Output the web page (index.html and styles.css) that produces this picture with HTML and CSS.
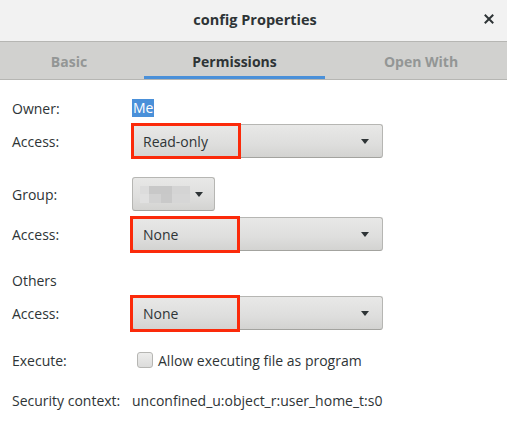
FILE: index.html
```html
<!DOCTYPE html>
<html>
<head>
<meta charset="utf-8">
<link rel="stylesheet" href="styles.css">
</head>
<body>
<div class="window">
  <header class="titlebar">
    <div class="title">config Properties</div>
    <div class="close">
      <svg width="10" height="10" viewBox="0 0 10 10"><path d="M1.5 1.5 L8.5 8.5 M8.5 1.5 L1.5 8.5" stroke="#2e3436" stroke-width="2" stroke-linecap="square"/></svg>
    </div>
  </header>
  <nav class="tabs">
    <div class="tab tab-basic">Basic</div>
    <div class="tab tab-perm active">Permissions</div>
    <div class="tab tab-open">Open With</div>
  </nav>
  <main class="content">
    <div class="row row-owner">
      <div class="label">Owner:</div>
      <div class="value"><span class="selected">Me</span></div>
    </div>
    <div class="row row-combo row-a1">
      <div class="label">Access:</div>
      <div class="value">
        <div class="combo wide">
          <span class="combo-text">Read-only</span>
          <span class="arrow"></span>
          <span class="mark"></span>
        </div>
      </div>
    </div>
    <div class="row row-combo row-group">
      <div class="label">Group:</div>
      <div class="value">
        <div class="combo small">
          <span class="blur">
            <i class="px a1"></i><i class="px a2"></i><i class="px a3"></i>
            <i class="px b1"></i><i class="px b2"></i><i class="px b3"></i><i class="px b4"></i>
          </span>
          <span class="arrow"></span>
        </div>
      </div>
    </div>
    <div class="row row-combo row-a2">
      <div class="label">Access:</div>
      <div class="value">
        <div class="combo wide">
          <span class="combo-text">None</span>
          <span class="arrow"></span>
          <span class="mark mark-b"></span>
        </div>
      </div>
    </div>
    <div class="row row-others">
      <div class="label">Others</div>
    </div>
    <div class="row row-combo row-a3">
      <div class="label">Access:</div>
      <div class="value">
        <div class="combo wide">
          <span class="combo-text">None</span>
          <span class="arrow"></span>
          <span class="mark mark-b"></span>
        </div>
      </div>
    </div>
    <div class="row row-exec">
      <div class="label">Execute:</div>
      <div class="value check-line">
        <span class="checkbox"></span>
        <span>Allow executing file as program</span>
      </div>
    </div>
    <div class="row row-sec">
      <div class="label">Security context:</div>
      <div class="value">unconfined_u:object_r:user_home_t:s0</div>
    </div>
  </main>
</div>
</body>
</html>
```

FILE: styles.css
```css
* { box-sizing: border-box; }
html, body { margin: 0; padding: 0; background: #ffffff; }
body {
  font-family: "Open Sans", "Noto Sans", sans-serif;
  font-size: 14px;
  color: #2e3436;
  width: 507px;
  height: 421px;
  overflow: hidden;
}
.titlebar {
  height: 42px;
  background: #f2f2f2;
  border-bottom: 1px solid #b6b6b3;
  display: flex;
  align-items: center;
  justify-content: center;
  position: relative;
}
.title {
  font-weight: 700;
  font-size: 14.5px;
  margin-left: 3px;
  margin-bottom: 2px;
}
.close {
  position: absolute;
  right: 13px;
  top: 14px;
  width: 10px;
  height: 10px;
  display: flex;
}
.tabs {
  height: 38px;
  background: #d1d1cf;
  border-bottom: 1px solid #b6b6b3;
  display: flex;
  color: #939695;
  font-weight: 700;
}
.tab {
  display: flex;
  align-items: center;
  justify-content: center;
  padding-top: 2px;
}
.tab-basic { width: 138px; }
.tab-perm { width: 181px; margin-left: 6px; }
.tab-open { flex: 1; padding-left: 10px; }
.tab.active {
  color: #2e3436;
  box-shadow: inset 0 -3px 0 #4a90d9;
}
.content {
  padding: 19px 0 0 12px;
  display: flex;
  flex-direction: column;
}
.row {
  display: flex;
  align-items: center;
  height: 18px;
}
.label { width: 120px; flex: none; }
.value { display: flex; align-items: center; }
.row-combo { height: 34px; }
.row-owner { margin-bottom: 7px; }
.row-a1 { margin-bottom: 19px; }
.row-group { margin-bottom: 6px; }
.row-a2 { margin-bottom: 20px; }
.row-others { margin-bottom: 7px; }
.row-a3 { margin-bottom: 21px; }
.row-exec { margin-bottom: 22px; }
.selected {
  background: #4a90d9;
  color: #ffffff;
  height: 18px;
  line-height: 18px;
  padding: 0 1px;
}
.combo {
  position: relative;
  height: 34px;
  border: 1px solid #b6b6b3;
  border-bottom-color: #a3a39f;
  border-radius: 3px;
  background: linear-gradient(to bottom, #e8e8e7, #dededd 60%, #d3d3d1);
  display: flex;
  align-items: center;
}
.combo.wide { width: 251px; padding: 0 13px 0 10px; }
.combo.small { width: 83px; padding: 0 11px 0 7px; }
.combo-text { flex: 1; }
.arrow {
  width: 0; height: 0;
  border-left: 4.5px solid transparent;
  border-right: 4.5px solid transparent;
  border-top: 5px solid #2e3436;
  margin-top: 1px;
}
.mark {
  position: absolute;
  left: -2px;
  top: -2px;
  width: 110px;
  height: 36px;
  border: 3px solid #fb2a0a;
}
.mark-b { left: -3px; top: -2px; width: 110px; height: 37px; }
.blur {
  width: 50px;
  height: 17px;
  position: relative;
  margin-right: 8px;
  margin-top: 1px;
  background: #dcdcdb;
}
.px { position: absolute; display: block; }
.a1 { left: 0; top: 0; width: 9px; height: 8px; background: #dcdcdc; }
.a2 { left: 9px; top: 0; width: 23px; height: 8px; background: #c8c8c8; }
.a3 { left: 32px; top: 0; width: 18px; height: 8px; background: #d4d4d4; }
.b1 { left: 0; top: 8px; width: 9px; height: 9px; background: #e0e0e0; }
.b2 { left: 9px; top: 8px; width: 12px; height: 9px; background: #d2d2d2; }
.b3 { left: 21px; top: 8px; width: 11px; height: 9px; background: #c9c9c9; }
.b4 { left: 32px; top: 8px; width: 18px; height: 9px; background: #d6d6d6; }
.check-line { gap: 5px; margin-left: 5px; }
.checkbox {
  width: 16px;
  height: 16px;
  border: 1px solid #b6b6b3;
  border-radius: 3px;
  background: linear-gradient(to bottom, #ededec, #dcdcdb);
}
```
